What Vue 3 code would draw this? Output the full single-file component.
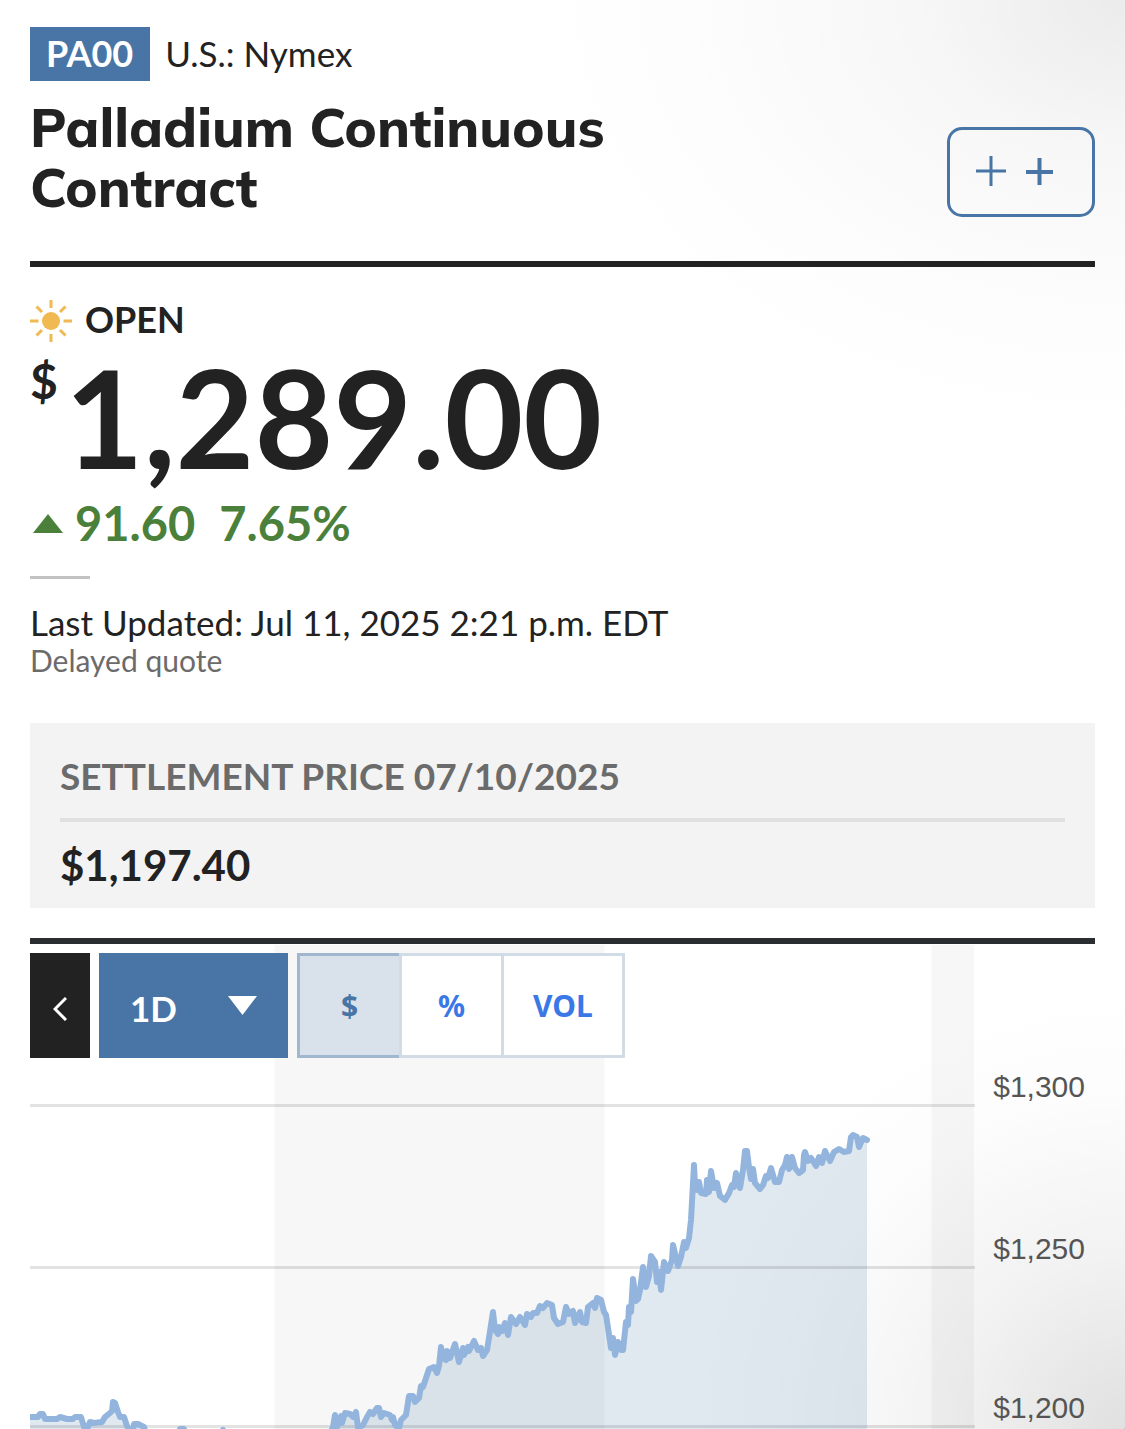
<script setup>
import { ref } from 'vue'

const range = ref('1D')
const ranges = ['1D', '5D', '1M', '3M', '1Y']
const mode = ref('$')
const modes = ['$', '%', 'VOL']
const axis = ['$1,300', '$1,250', '$1,200']

const points = [
  [30, 1417], [38, 1417], [40, 1414], [43, 1414], [45, 1419], [57, 1419], [60, 1417], [67, 1419], [73, 1419], [75, 1417], [81, 1417],
  [84, 1427], [87, 1429], [90, 1422], [94, 1423], [102, 1422], [105, 1417], [110, 1413], [112, 1411], [113, 1402], [115, 1403],
  [118, 1412], [120, 1417], [124, 1417], [127, 1426], [130, 1431], [133, 1431], [134, 1424], [138, 1424], [144, 1427], [146, 1434],
  [178, 1434], [180, 1429], [184, 1429], [186, 1434], [220, 1434], [223, 1430], [226, 1434], [330, 1434], [333, 1427], [335, 1415],
  [337, 1427], [341, 1416], [342, 1423], [345, 1413], [350, 1414], [353, 1417], [356, 1412], [358, 1428], [363, 1425], [367, 1417],
  [370, 1412], [373, 1414], [377, 1408], [379, 1408], [381, 1417], [384, 1413], [390, 1415], [392, 1420], [393, 1417], [395, 1425],
  [399, 1428], [401, 1420], [406, 1415], [409, 1396], [413, 1396], [415, 1402], [419, 1398], [421, 1386], [423, 1387], [426, 1378],
  [429, 1369], [434, 1367], [437, 1373], [439, 1366], [441, 1347], [443, 1358], [446, 1360], [447, 1351], [450, 1358], [455, 1344],
  [459, 1362], [463, 1348], [464, 1355], [468, 1347], [469, 1351], [474, 1341], [478, 1350], [481, 1348], [483, 1356], [487, 1350],
  [489, 1338], [493, 1312], [495, 1330], [498, 1334], [499, 1327], [502, 1331], [505, 1323], [508, 1335], [511, 1317], [516, 1324],
  [520, 1317], [525, 1325], [527, 1314], [531, 1317], [533, 1313], [537, 1313], [540, 1306], [543, 1308], [547, 1303], [552, 1305],
  [554, 1318], [558, 1324], [563, 1322], [566, 1307], [569, 1314], [573, 1311], [575, 1323], [580, 1312], [582, 1322], [586, 1323],
  [588, 1307], [593, 1303], [595, 1308], [597, 1298], [601, 1300], [604, 1312], [606, 1315], [608, 1328], [611, 1348], [613, 1338],
  [615, 1355], [618, 1342], [621, 1350], [623, 1350], [626, 1322], [628, 1325], [629, 1307], [631, 1312], [633, 1279], [636, 1301],
  [638, 1299], [640, 1290], [643, 1267], [646, 1287], [649, 1276], [651, 1256], [655, 1262], [657, 1282], [659, 1272], [661, 1290],
  [664, 1262], [668, 1271], [672, 1260], [673, 1245], [678, 1266], [681, 1257], [684, 1242], [686, 1248], [689, 1238], [691, 1220],
  [694, 1165], [695, 1185], [697, 1190], [699, 1182], [701, 1193], [706, 1194], [707, 1180], [709, 1192], [711, 1171], [714, 1188],
  [717, 1183], [720, 1196], [725, 1200], [729, 1193], [732, 1185], [734, 1187], [736, 1173], [740, 1188], [743, 1170], [745, 1151],
  [747, 1151], [749, 1167], [751, 1179], [753, 1169], [755, 1183], [760, 1189], [763, 1185], [766, 1176], [768, 1178], [771, 1168],
  [775, 1182], [779, 1182], [782, 1170], [785, 1165], [787, 1157], [789, 1169], [792, 1157], [795, 1168], [799, 1173], [803, 1170],
  [804, 1155], [805, 1152], [808, 1161], [811, 1158], [816, 1166], [819, 1157], [822, 1163], [825, 1151], [830, 1161], [834, 1152],
  [839, 1149], [844, 1152], [849, 1151], [851, 1137], [853, 1135], [857, 1137], [859, 1147], [863, 1138], [867, 1140]
]
const line = 'M' + points.map((p) => p.join(' ')).join('L')
const area = line + 'V1440H30Z'
</script>

<template>
  <main class="page">
    <header class="head">
      <div class="ticker">
        <span class="badge">PA00</span>
        <span class="exchange">U.S.: Nymex</span>
      </div>
      <div class="title-row">
        <h1>Palladium Continuous Contract</h1>
        <button class="watch" type="button" aria-label="Add to watchlist">
          <svg width="80" height="32" viewBox="0 0 80 32" fill="none" stroke="currentColor">
            <path d="M0 15H30M15 0V30" stroke-width="3" />
            <path d="M50 16H77M63.500 2V29" stroke-width="4" />
          </svg>
        </button>
      </div>
    </header>

    <section class="quote">
      <div class="status">
        <svg width="42" height="42" viewBox="0 0 42 42" stroke="#f0b951" stroke-width="3">
          <circle cx="21" cy="21" r="9" fill="#f0b951" stroke="none" />
          <path d="M21 0V8M21 34V42M0 21H8.500M33.500 21H42M6.500 6.500L12 12M30 30L35.500 35.500M35.500 6.500L30 12M12 30L6.500 35.500" />
        </svg>
        <span>OPEN</span>
      </div>
      <div class="price"><sup>$</sup><span>1,289.00</span></div>
      <div class="change">
        <svg width="30" height="19" viewBox="0 0 30 19"><path d="M0 19L15 0L30 19Z" fill="#4a803a" /></svg>
        <span>91.60</span>
        <span class="percent">7.65%</span>
      </div>
      <p class="updated">Last Updated: Jul 11, 2025 2:21 p.m. EDT</p>
      <p class="delayed">Delayed quote</p>
    </section>

    <section class="settlement">
      <h2>SETTLEMENT PRICE 07/10/2025</h2>
      <p>$1,197.40</p>
    </section>

    <section class="chart">
      <div class="toolbar">
        <button class="back" type="button" aria-label="Back">
          <svg width="14" height="24" viewBox="0 0 14 24" fill="none" stroke="#fff" stroke-width="3"><path d="M13 1L2 12L13 23" /></svg>
        </button>
        <div class="range">
          <select v-model="range" aria-label="Time range">
            <option v-for="r in ranges" :key="r">{{ r }}</option>
          </select>
          <svg class="caret" width="29" height="19" viewBox="0 0 29 19"><path d="M0 0H29L14.500 19Z" fill="#fff" /></svg>
        </div>
        <div class="modes">
          <button
            v-for="m in modes"
            :key="m"
            type="button"
            :class="{ active: m === mode }"
            :aria-pressed="m === mode"
            @click="mode = m"
          >{{ m }}</button>
        </div>
      </div>
      <svg class="plot" viewBox="30 944 945 485" preserveAspectRatio="none" role="img" aria-label="Price over one day">
        <path d="M274.500 945H604.500V1429H274.500ZM931.500 945H974V1429H931.500Z" fill="#000" fill-opacity="0.030" />
        <path :d="area" fill="#4875a5" fill-opacity="0.170" />
        <path d="M30 1105.500H975M30 1267.500H975M30 1426.500H975" stroke="#000" stroke-opacity="0.110" stroke-width="3" />
        <path :d="line" fill="none" stroke="#93b5dd" stroke-width="6" stroke-linejoin="round" stroke-linecap="round" />
      </svg>
      <div class="axis">
        <span v-for="a in axis" :key="a">{{ a }}</span>
      </div>
    </section>
  </main>
</template>

<style>
body {
  margin: 0;
  overflow-x: hidden;
}
</style>

<style scoped>
.page {
  box-sizing: border-box;
  min-height: 100vh;
  padding: 27px 30px 0;
  color: #222;
  font-family: Lato, sans-serif;
  background:
    radial-gradient(circle at 0 0, transparent 10px, #777 12px) 100% 100% / 8px 8px no-repeat,
    radial-gradient(600px 440px at 100% 0, rgba(0, 0, 0, 0.080), rgba(0, 0, 0, 0.030) 35%, rgba(0, 0, 0, 0.008) 75%, transparent),
    radial-gradient(440px 440px at 100% 100%, rgba(0, 0, 0, 0.120), rgba(0, 0, 0, 0.050) 40%, rgba(0, 0, 0, 0.012) 75%, transparent),
    #fff;
}
h1, h2, p {
  margin: 0;
}
button, select {
  margin: 0;
  padding: 0;
  border: 0;
  border-radius: 0;
  font: inherit;
  cursor: pointer;
}
svg {
  display: block;
  flex: none;
}
.head {
  padding-bottom: 44px;
  border-bottom: 6px solid #222;
}
.ticker {
  display: flex;
  gap: 15px;
  font-size: 35px;
  line-height: 52px;
}
.badge {
  padding: 0 17px 2px 16px;
  color: #fff;
  font-size: 36px;
  font-weight: 700;
  background: #4875a5;
}
.title-row {
  display: flex;
  align-items: flex-end;
  justify-content: space-between;
  padding-top: 16px;
}
h1 {
  max-width: 640px;
  font-family: Mulish, Lato, sans-serif;
  font-size: 54px;
  font-weight: 800;
  line-height: 60px;
}
.watch {
  display: flex;
  align-items: center;
  width: 148px;
  height: 90px;
  padding-left: 26px;
  border: 3px solid #4875a5;
  border-radius: 15px;
  color: #4875a5;
  background: transparent;
}
.quote {
  padding-top: 33px;
}
.status {
  display: flex;
  gap: 13px;
  font-size: 36px;
  font-weight: 700;
  line-height: 38px;
}
.price {
  display: flex;
  gap: 7px;
  font-weight: 700;
}
.price sup {
  font-size: 48px;
  line-height: 78px;
}
.price span {
  font-size: 136px;
  line-height: 150px;
}
.change {
  display: flex;
  align-items: center;
  gap: 12px;
  padding: 0 3px;
  color: #4a803a;
  font-size: 47px;
  font-weight: 700;
  line-height: 62px;
}
.percent {
  padding-left: 12px;
}
.updated {
  padding-top: 22px;
  font-size: 35px;
  line-height: 42px;
}
.updated::before {
  display: block;
  width: 60px;
  height: 3px;
  margin-bottom: 22px;
  background: #c2c2c2;
  content: '';
}
.delayed {
  color: #6b6b6b;
  font-size: 30px;
  line-height: 34px;
}
.settlement {
  margin: 46px 0 30px;
  padding: 30px 30px 18px;
  background: #f3f3f3;
}
.settlement h2 {
  padding-bottom: 20px;
  border-bottom: 4px solid #e0e0e0;
  color: #6b6b6b;
  font-size: 37px;
  line-height: 45px;
}
.settlement p {
  padding-top: 18px;
  font-size: 42px;
  font-weight: 700;
  line-height: 50px;
}
.chart {
  display: grid;
  grid-template-columns: 1fr 120px;
  border-top: 6px solid #2a2e31;
}
.toolbar {
  z-index: 1;
  display: flex;
  grid-area: 1 / 1;
  gap: 9px;
  align-self: start;
  height: 105px;
  padding-top: 9px;
}
.back {
  display: grid;
  place-items: center;
  width: 60px;
  padding-top: 6px;
  background: #222;
}
.range {
  display: grid;
  width: 189px;
  background: #4875a5;
}
.range select {
  grid-area: 1 / 1;
  padding: 5px 31px 0;
  color: #fff;
  font-size: 35px;
  font-weight: 700;
  background: transparent;
  appearance: none;
}
.caret {
  grid-area: 1 / 1;
  place-self: center end;
  margin-right: 31px;
  pointer-events: none;
}
.modes {
  display: flex;
  font-family: "Noto Sans", sans-serif;
  font-size: 30px;
  font-weight: 700;
}
.modes button {
  min-width: 105px;
  margin-right: -3px;
  padding: 0 29px;
  border: 3px solid #d1dce6;
  color: #3b78e7;
  background: #fff;
}
.modes .active {
  border-color: #a1b6cf;
  border-right-color: #d1dce6;
  color: #4875a5;
  background: #d9e1ea;
}
.plot {
  grid-area: 1 / 1;
  width: 100%;
  height: 485px;
}
.axis {
  display: grid;
  grid-area: 1 / 2;
  grid-template-rows: 162px 159px auto;
  align-content: start;
  justify-items: end;
  padding: 125px 10px 0 0;
  color: #555;
  font-family: "Liberation Sans", Arial, sans-serif;
  font-size: 30px;
  line-height: 36px;
}
</style>
